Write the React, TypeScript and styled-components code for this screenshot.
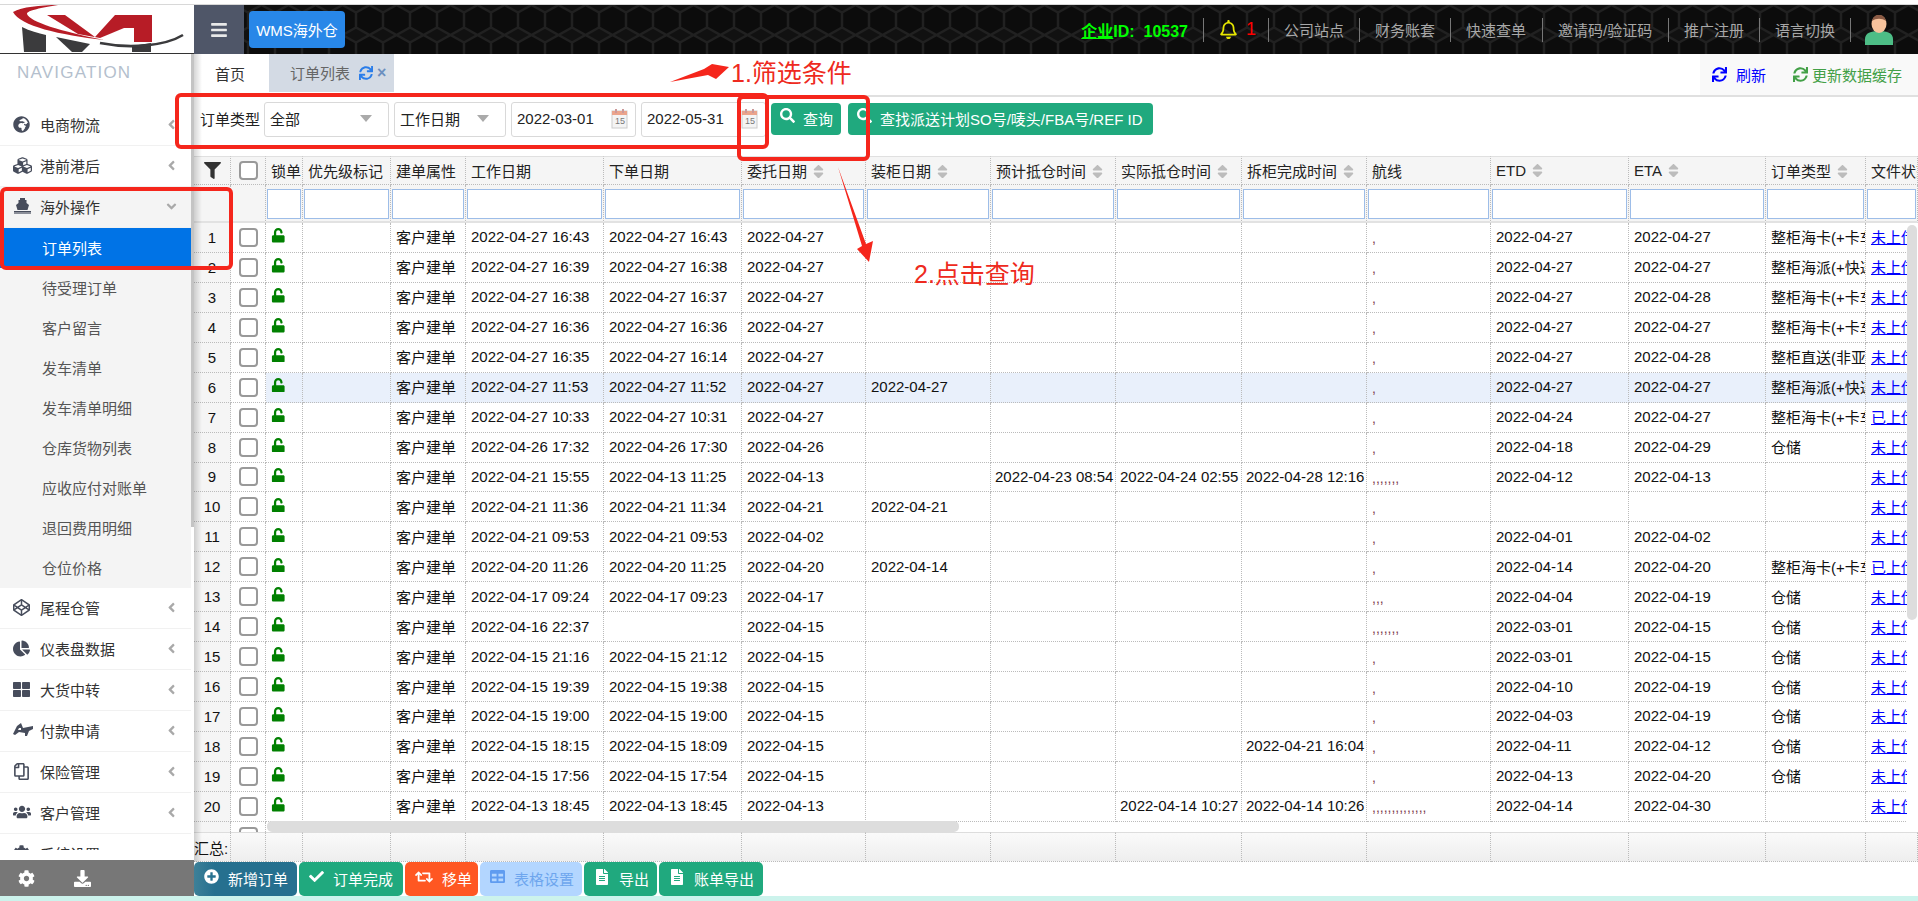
import React from "react";
import styled, { createGlobalStyle } from "styled-components";
import {
  FaAngleDown, FaAngleLeft, FaBars, FaChartPie, FaCheck, FaCodepen, FaCog, FaCubes, FaDownload,
  FaFileAlt, FaFilter, FaGlobeAfrica, FaPlusCircle, FaRegBell, FaRegCopy, FaRetweet,
  FaSearch, FaSort, FaSync, FaTable, FaThLarge, FaUnlock, FaUsers,
} from "react-icons/fa";

const FONT = `"Liberation Sans", "Noto Sans CJK SC", sans-serif`;

const Global = createGlobalStyle`
  html, body { margin: 0; padding: 0; background: #fff; overflow: hidden; }
  body { font-family: ${FONT}; font-size: 15px; color: #222; }
  * { box-sizing: border-box; }
`;

const Page = styled.div`
  position: relative;
  width: 1918px;
  height: 901px;
  display: flex;
  flex-direction: column;
  overflow: hidden;
`;
const TopLine = styled.div`
  height: 5px;
  flex: none;
  background: #fff;
  border-bottom: 1px solid #d8d8d8;
`;
const Header = styled.header`
  height: 49px;
  flex: none;
  display: flex;
  align-items: stretch;
`;
const LogoBox = styled.div`
  width: 194px;
  flex: none;
  background: #fff;
  border-bottom: 1px solid #333;
`;
const Toggle = styled.div`
  width: 50px;
  flex: none;
  background: #4f5668;
  color: #e8e8e8;
  display: flex;
  align-items: center;
  justify-content: center;
  font-size: 18px;
`;
const DarkBar = styled.div`
  position: relative;
  flex: 1;
  background: #111;
  display: flex;
  align-items: center;
  padding-left: 5px;
`;
const HexLayer = styled.svg`
  position: absolute;
  inset: 0;
  width: 100%;
  height: 100%;
`;
const WmsButton = styled.div`
  position: relative;
  width: 96px;
  height: 37px;
  background: #2887e8;
  color: #fff;
  border-radius: 4px;
  display: flex;
  align-items: center;
  justify-content: center;
  font-size: 15px;
`;
const HeadNav = styled.div`
  position: relative;
  margin-left: auto;
  display: flex;
  align-items: center;
`;
const IdText = styled.span`
  color: #0f0;
  font-weight: 700;
  font-size: 16px;
  padding-right: 15px;
`;
const HeadItem = styled.div<{ $w: number }>`
  width: ${(p) => p.$w}px;
  height: 24px;
  padding-left: 15px;
  border-left: 1px solid #777;
  color: #a8a8a8;
  display: flex;
  align-items: center;
  gap: 8px;
  font-size: 15px;
  white-space: nowrap;
`;
const BellCount = styled.span`
  color: #f00;
  font-size: 18px;
`;
const AvatarBox = styled.div`
  width: 68px;
  height: 24px;
  border-left: 1px solid #777;
  display: flex;
  align-items: center;
  padding-left: 13px;
`;

const Body = styled.div`
  flex: 1;
  min-height: 0;
  display: flex;
`;
const Sidebar = styled.aside`
  width: 194px;
  flex: none;
  display: flex;
  flex-direction: column;
  background: #fff;
`;
const NavScroll = styled.div`
  position: relative;
  flex: 1;
  min-height: 0;
  overflow: hidden;
`;
const NavTrack = styled.div`
  position: absolute;
  top: 0;
  right: 0;
  width: 3px;
  height: 473px;
  background: #c4c4c4;
`;
const NavFade = styled.div`
  position: absolute;
  left: 0;
  right: 0;
  bottom: 0;
  height: 10px;
  background: #fff;
`;
const NavTitle = styled.div`
  height: 51px;
  padding: 8px 0 0 17px;
  color: #b4bfcd;
  font-size: 17px;
  line-height: 22px;
  letter-spacing: 1.2px;
`;
const NavItem = styled.div<{ $open?: boolean }>`
  width: 191px;
  height: 41px;
  display: flex;
  align-items: center;
  padding: 0 0 2px 13px;
  background: ${(p) => (p.$open ? "#f4f4f4" : "#fff")};
  border-bottom: 1px solid #f1f1f1;
  color: #333;
  font-size: 15px;
`;
const NavIcon = styled.span`
  width: 27px;
  flex: none;
  display: flex;
  color: #474d5c;
  font-size: 17px;
`;
const NavArrow = styled.span`
  margin-left: auto;
  margin-right: 12px;
  display: flex;
  color: #a9a9a9;
  font-size: 15px;
`;
const SubItem = styled.div<{ $active?: boolean }>`
  width: 191px;
  height: 40px;
  display: flex;
  align-items: center;
  padding: 0 0 2px 42px;
  background: ${(p) => (p.$active ? "#0073e6" : "#f4f4f4")};
  color: ${(p) => (p.$active ? "#fff" : "#555")};
  font-size: 15px;
`;
const SideFoot = styled.div`
  height: 36px;
  flex: none;
  background: #777;
  color: #fff;
  display: flex;
  align-items: center;
  font-size: 17px;
  padding-left: 18px;
  gap: 39px;
`;

const Main = styled.main`
  position: relative;
  flex: 1;
  min-width: 0;
  display: flex;
  flex-direction: column;
  background: #fff;
`;
const LeftShade = styled.div`
  position: absolute;
  left: 0;
  top: 0;
  bottom: 34px;
  width: 8px;
  z-index: 3;
  pointer-events: none;
  background: linear-gradient(to right, rgba(0, 0, 0, 0.16), rgba(0, 0, 0, 0));
`;
const TabsRow = styled.div`
  height: 43px;
  flex: none;
  display: flex;
  border-bottom: 2px solid #e0e0e0;
`;
const Tab = styled.div<{ $on?: boolean }>`
  width: ${(p) => (p.$on ? 125 : 75)}px;
  height: ${(p) => (p.$on ? 38 : 41)}px;
  display: flex;
  align-items: center;
  padding: ${(p) => (p.$on ? "0 0 1px 21px" : "0 0 3px 21px")};
  gap: 9px;
  background: ${(p) => (p.$on ? "#d3dae4" : "#fff")};
  color: ${(p) => (p.$on ? "#666" : "#333")};
  font-size: 15px;
`;
const TabIcons = styled.span`
  display: flex;
  align-items: center;
  gap: 4px;
  color: #2b7de9;
  font-size: 14px;
  i { color: #6c8fbf; font-style: normal; font-size: 16px; font-weight: 700; }
`;
const TabTools = styled.div`
  margin-left: auto;
  width: 218px;
  height: 41px;
  background: #f9f9f9;
  display: flex;
  align-items: center;
  padding-left: 12px;
`;
const ToolLink = styled.span<{ $c: string; $w: number; $gap: number }>`
  width: ${(p) => p.$w}px;
  display: flex;
  align-items: center;
  gap: ${(p) => p.$gap}px;
  color: ${(p) => p.$c};
  font-size: 15px;
  white-space: nowrap;
`;
const FilterBar = styled.div`
  height: 59px;
  flex: none;
  display: flex;
  align-items: flex-start;
  padding: 5px 0 0 6px;
`;
const FilterLabel = styled.span`
  width: 64px;
  height: 35px;
  display: flex;
  align-items: center;
  padding-bottom: 2px;
  font-size: 15px;
`;
const Field = styled.div<{ $w: number }>`
  width: ${(p) => p.$w}px;
  height: 35px;
  margin-right: 5px;
  border: 1px solid #d9d9d9;
  border-radius: 3px;
  background: #fff;
  display: flex;
  align-items: center;
  justify-content: space-between;
  padding: 0 6px 2px 5px;
  font-size: 15px;
`;
const Caret = styled.span`
  width: 0;
  height: 0;
  margin-right: 10px;
  border-left: 6px solid transparent;
  border-right: 6px solid transparent;
  border-top: 7px solid #aaa;
`;
const GreenBtn = styled.div<{ $w: number }>`
  position: relative;
  width: ${(p) => p.$w}px;
  height: 32px;
  margin: 1px 7px 0 0;
  background: #20a97e;
  border-radius: 4px;
  color: #fff;
  display: flex;
  align-items: center;
  padding: 0 0 2px 9px;
  gap: 8px;
  font-size: 15px;
  white-space: nowrap;
  svg { margin-top: -5px; flex: none; }
`;

const TableArea = styled.div`
  position: relative;
  height: 676px;
  flex: none;
  overflow: hidden;
`;
const Grid = styled.table`
  table-layout: fixed;
  width: 1724px;
  border-collapse: separate;
  border-spacing: 0;
  font-size: 15px;
  color: #111;
  th, td {
    padding: 0 5px 1px;
    border-right: 1px dotted #bbb;
    border-bottom: 1px dotted #bbb;
    white-space: nowrap;
    overflow: hidden;
    font-weight: 400;
    text-align: left;
  }
`;
const HeadRow = styled.tr`
  height: 29px;
  background: #f5f5f5;
  th { border-top: 1px solid #e0e0e0; color: #222; }
`;
const SearchRow = styled.tr`
  height: 38px;
  background: #f5f5f5;
  td { padding: 2px 1px 0; border-bottom: 2px solid #e2e2e2; }
`;
const SearchBox = styled.input`
  display: block;
  width: 100%;
  height: 30px;
  border: 1px solid #9dbde8;
  background: #fff;
  outline: none;
`;
const DataRow = styled.tr<{ $hi?: boolean }>`
  height: 29.95px;
  background: ${(p) => (p.$hi ? "#e9f0fb" : "#fff")};
`;
const NumCell = styled.td`
  background: #f5f5f5;
  &&& { text-align: center; padding: 0; }
`;
const BoxCell = styled.td`
  background: #fff;
  &&& { padding: 0 0 0 8px; }
`;
const BlankCell = styled.td`
  &&& { border-right: 0; border-bottom: 0; background: #fff; }
`;
const Check = styled.span`
  display: block;
  width: 19px;
  height: 19px;
  border: 2px solid #999;
  border-radius: 4px;
  background: #fff;
`;
const LockIcon = styled(FaUnlock)`
  display: block;
  margin: -3px 0 0 0;
  color: #008000;
  font-size: 14.5px;
`;
const HeadSort = styled.span`
  display: inline-flex;
  margin-left: 3px;
  vertical-align: -3px;
  color: #bcbcbc;
  font-size: 17px;
`;
const RouteText = styled.span`
  display: block;
  margin-top: 3px;
  color: #7d3c50;
  font-size: 14px;
  line-height: 16px;
`;
const FileLink = styled.a`
  color: #00f;
  text-decoration: underline;
`;
const BodyGutter = styled.div`
  position: absolute;
  top: 67px;
  right: 0;
  width: 11px;
  bottom: 0;
  background: #fff;
  z-index: 1;
`;
const VScroll = styled.div`
  position: absolute;
  top: 69px;
  right: 1px;
  width: 10px;
  height: 395px;
  background: #ddd;
  border-radius: 5px;
  z-index: 2;
`;
const HScroll = styled.div`
  position: absolute;
  left: 73px;
  bottom: 0;
  width: 692px;
  height: 11px;
  background: #ddd;
  border-radius: 5px;
  z-index: 2;
`;
const SumGrid = styled(Grid)`
  flex: none;
  td {
    height: 30px;
    background: linear-gradient(#fafafa, #eee);
    border-top: 1px solid #ddd;
    padding: 0;
    overflow: visible;
  }
`;
const ActionBar = styled.div`
  height: 34px;
  flex: none;
  display: flex;
  gap: 2px;
`;
const ActionBtn = styled.div<{ $w: number; $bg: string; $fg?: string; $ic?: string }>`
  width: ${(p) => p.$w}px;
  height: 34px;
  display: flex;
  align-items: center;
  padding: 0 0 2px 10px;
  gap: 9px;
  border-radius: 5px;
  background: ${(p) => p.$bg};
  color: ${(p) => p.$fg || "#fff"};
  font-size: 15px;
  white-space: nowrap;
  svg { flex: none; margin-top: -3px; color: ${(p) => p.$ic || "#fff"}; }
`;
const Strip = styled.div`
  height: 5px;
  flex: none;
  background: #ccf3ec;
`;
const MarkLayer = styled.svg`
  position: absolute;
  left: 0;
  top: 0;
  width: 1918px;
  height: 901px;
  z-index: 10;
  pointer-events: none;
`;
const MarkText = styled.span<{ $x: number; $y: number }>`
  position: absolute;
  left: ${(p) => p.$x}px;
  top: ${(p) => p.$y}px;
  z-index: 11;
  color: #ee2a20;
  font-size: 25px;
  line-height: 28px;
  white-space: nowrap;
`;

const COLS = [37, 35, 37, 88, 75, 138, 138, 124, 125, 125, 126, 125, 124, 138, 137, 100, 52];
const Cols = () => (
  <colgroup>
    {COLS.map((w, i) => (
      <col key={i} style={{ width: w }} />
    ))}
  </colgroup>
);

const HEADS: [string, boolean][] = [
  ["锁单", false], ["优先级标记", false], ["建单属性", false], ["工作日期", false], ["下单日期", false],
  ["委托日期", true], ["装柜日期", true], ["预计抵仓时间", true], ["实际抵仓时间", true], ["拆柜完成时间", true],
  ["航线", false], ["ETD", true], ["ETA", true], ["订单类型", true], ["文件状态", false],
];

const K = "整柜海卡(+卡车派送)";
const P = "整柜海派(+快递派送)";
const Z = "整柜直送(非亚马逊)";
const C = "仓储";
type R = [string, string, string, string, string, string, string, string, string, string, string, string];
const d = (s: string) => (s ? "2022-" + s : "");
const ROWS: R[] = [
  ["04-27 16:43", "04-27 16:43", "04-27", "", "", "", "", ",", "04-27", "04-27", K, "未上传"],
  ["04-27 16:39", "04-27 16:38", "04-27", "", "", "", "", ",", "04-27", "04-27", P, "未上传"],
  ["04-27 16:38", "04-27 16:37", "04-27", "", "", "", "", ",", "04-27", "04-28", K, "未上传"],
  ["04-27 16:36", "04-27 16:36", "04-27", "", "", "", "", ",", "04-27", "04-27", K, "未上传"],
  ["04-27 16:35", "04-27 16:14", "04-27", "", "", "", "", ",", "04-27", "04-28", Z, "未上传"],
  ["04-27 11:53", "04-27 11:52", "04-27", "04-27", "", "", "", ",", "04-27", "04-27", P, "未上传"],
  ["04-27 10:33", "04-27 10:31", "04-27", "", "", "", "", ",", "04-24", "04-27", K, "已上传"],
  ["04-26 17:32", "04-26 17:30", "04-26", "", "", "", "", ",", "04-18", "04-29", C, "未上传"],
  ["04-21 15:55", "04-13 11:25", "04-13", "", "04-23 08:54", "04-24 02:55", "04-28 12:16", ",,,,,,,", "04-12", "04-13", "", "未上传"],
  ["04-21 11:36", "04-21 11:34", "04-21", "04-21", "", "", "", ",", "", "", "", "未上传"],
  ["04-21 09:53", "04-21 09:53", "04-02", "", "", "", "", ",", "04-01", "04-02", "", "未上传"],
  ["04-20 11:26", "04-20 11:25", "04-20", "04-14", "", "", "", ",", "04-14", "04-20", K, "已上传"],
  ["04-17 09:24", "04-17 09:23", "04-17", "", "", "", "", ",,,", "04-04", "04-19", C, "未上传"],
  ["04-16 22:37", "", "04-15", "", "", "", "", ",,,,,,,", "03-01", "04-15", C, "未上传"],
  ["04-15 21:16", "04-15 21:12", "04-15", "", "", "", "", ",", "03-01", "04-15", C, "未上传"],
  ["04-15 19:39", "04-15 19:38", "04-15", "", "", "", "", ",", "04-10", "04-19", C, "未上传"],
  ["04-15 19:00", "04-15 19:00", "04-15", "", "", "", "", ",", "04-03", "04-19", C, "未上传"],
  ["04-15 18:15", "04-15 18:09", "04-15", "", "", "", "04-21 16:04", ",", "04-11", "04-12", C, "未上传"],
  ["04-15 17:56", "04-15 17:54", "04-15", "", "", "", "", ",", "04-13", "04-20", C, "未上传"],
  ["04-13 18:45", "04-13 18:45", "04-13", "", "", "04-14 10:27", "04-14 10:26", ",,,,,,,,,,,,,,", "04-14", "04-30", "", "未上传"],
];

const Logo = () => (
  <svg width="194" height="49" viewBox="0 5 194 49">
    <defs>
      <filter id="lb"><feGaussianBlur stdDeviation="0.6" /></filter>
    </defs>
    <g filter="url(#lb)">
      <path d="M47 15H65L95 37 115 15H152V42H134V28H124L100 38 78 34Z" fill="#b71c26" />
      <path d="M13 12C22 7 40 5 58 5 42 8 27 10 27 14 30 22 60 31 104 40 60 35 20 26 13 12Z" fill="#b71c26" />
      <path d="M22 27C30 31 38 33 46 35V52H24Z" fill="#3a3a3c" />
      <path d="M56 37 90 44 82 52H72Z" fill="#3a3a3c" />
      <path d="M132 46 151 43V52H132Z" fill="#3a3a3c" />
      <path d="M100 43C130 49 165 46 183 35" fill="none" stroke="#3a3a3c" strokeWidth="2.6" />
    </g>
  </svg>
);

const ShipIcon = () => (
  <svg width="19" height="18" viewBox="0 0 19 18" fill="currentColor">
    <path d="M7 1h5v2h1.5v3L16 8l-1.5 5h-10L3 8l2.5-2V3H7z" />
    <rect x="1" y="14" width="17" height="3" fill="#8b8f99" />
    <path d="M1 14h17v1H1z" />
  </svg>
);

const PayIcon = () => (
  <svg width="21" height="14" viewBox="0 0 21 14" fill="currentColor">
    <path fillRule="evenodd" d="M0 11 4 3 8 0 10 5 20 3 20 6 16 8 14 13 12 13 12 10 6 9 2 12ZM6 5 5 7 8 7 8 5Z" />
  </svg>
);

const Calendar = () => (
  <svg width="18" height="20" viewBox="0 0 18 20">
    <rect x="1" y="2" width="15" height="17" fill="#f4f4f4" stroke="#ccc" />
    <rect x="1" y="2" width="15" height="4" fill="#eba48c" />
    <rect x="4" y="0" width="2" height="4" fill="#c99" />
    <rect x="11" y="0" width="2" height="4" fill="#c99" />
    <text x="4" y="15" fontSize="9" fontFamily="Liberation Sans" fill="#777">15</text>
  </svg>
);

const Avatar = () => (
  <svg width="30" height="30" viewBox="0 0 30 30">
    <path d="M1 30V24C1 18 7 16 15 16S29 18 29 24V30Z" fill="#4dbd86" />
    <ellipse cx="15" cy="9" rx="7.5" ry="9" fill="#f6c29c" />
    <path d="M8 6C9 1 12 0 15 0S21 1 22 6C18 3 12 3 8 6Z" fill="#8a5a44" />
  </svg>
);

const Marks = () => (
  <MarkLayer viewBox="0 0 1918 901">
    <g fill="none" stroke="#f5261c" strokeWidth="4">
      <rect x="177" y="95" width="590" height="52" rx="4" />
      <rect x="739" y="97" width="129" height="62" rx="4" />
      <rect x="2" y="189" width="229" height="79" rx="4" />
    </g>
    <g fill="#f5261c">
      <polygon points="670,82 704,69 712,64 729,67 716,79 708,75" />
      <polygon points="838,167 866,244 873,241 869,262 857,249 862,246" />
    </g>
  </MarkLayer>
);

export default function App() {
  return (
    <Page>
      <Global />
      <TopLine />
      <Header>
        <LogoBox><Logo /></LogoBox>
        <Toggle><FaBars /></Toggle>
        <DarkBar>
          <HexLayer>
            <defs>
              <pattern id="hex" width="27" height="30" patternUnits="userSpaceOnUse" x="4" y="0">
                <path d="M13.5 0 27 7.5V22.5L13.5 30 0 22.5V7.5Z" fill="#0c0c0c" stroke="#212121" strokeWidth="2.4" />
              </pattern>
            </defs>
            <rect width="100%" height="100%" fill="url(#hex)" />
          </HexLayer>
          <WmsButton>WMS海外仓</WmsButton>
          <HeadNav>
            <IdText><u>企业</u>ID:&nbsp;&nbsp;10537</IdText>
            <HeadItem $w={65}>
              <FaRegBell color="#e6e600" size={19} />
              <BellCount>1</BellCount>
            </HeadItem>
            <HeadItem $w={91}>公司站点</HeadItem>
            <HeadItem $w={91}>财务账套</HeadItem>
            <HeadItem $w={92}>快速查单</HeadItem>
            <HeadItem $w={126}>邀请码/验证码</HeadItem>
            <HeadItem $w={91}>推广注册</HeadItem>
            <HeadItem $w={91}>语言切换</HeadItem>
            <AvatarBox><Avatar /></AvatarBox>
          </HeadNav>
        </DarkBar>
      </Header>
      <Body>
        <Sidebar>
          <NavScroll>
            <NavTrack />
            <NavTitle>NAVIGATION</NavTitle>
            <NavItem><NavIcon><FaGlobeAfrica /></NavIcon>电商物流<NavArrow><FaAngleLeft /></NavArrow></NavItem>
            <NavItem><NavIcon><FaCubes size={19} /></NavIcon>港前港后<NavArrow><FaAngleLeft /></NavArrow></NavItem>
            <NavItem $open><NavIcon><ShipIcon /></NavIcon>海外操作<NavArrow><FaAngleDown /></NavArrow></NavItem>
            <SubItem $active>订单列表</SubItem>
            {["待受理订单", "客户留言", "发车清单", "发车清单明细", "仓库货物列表", "应收应付对账单", "退回费用明细", "仓位价格"].map((s) => (
              <SubItem key={s}>{s}</SubItem>
            ))}
            <NavItem><NavIcon><FaCodepen /></NavIcon>尾程仓管<NavArrow><FaAngleLeft /></NavArrow></NavItem>
            <NavItem><NavIcon><FaChartPie /></NavIcon>仪表盘数据<NavArrow><FaAngleLeft /></NavArrow></NavItem>
            <NavItem><NavIcon><FaThLarge /></NavIcon>大货中转<NavArrow><FaAngleLeft /></NavArrow></NavItem>
            <NavItem><NavIcon><PayIcon /></NavIcon>付款申请<NavArrow><FaAngleLeft /></NavArrow></NavItem>
            <NavItem><NavIcon><FaRegCopy style={{ transform: "scaleX(-1)" }} /></NavIcon>保险管理<NavArrow><FaAngleLeft /></NavArrow></NavItem>
            <NavItem><NavIcon><FaUsers size={18} /></NavIcon>客户管理<NavArrow><FaAngleLeft /></NavArrow></NavItem>
            <NavItem><NavIcon><FaCog /></NavIcon>系统设置</NavItem>
            <NavFade />
          </NavScroll>
          <SideFoot><FaCog /><FaDownload /></SideFoot>
        </Sidebar>
        <Main>
          <LeftShade />
          <TabsRow>
            <Tab>首页</Tab>
            <Tab $on>订单列表<TabIcons><FaSync /><i>×</i></TabIcons></Tab>
            <TabTools>
              <ToolLink $c="#00f" $w={81} $gap={9}><FaSync />刷新</ToolLink>
              <ToolLink $c="#43a047" $w={116} $gap={4}><FaSync />更新数据缓存</ToolLink>
            </TabTools>
          </TabsRow>
          <FilterBar>
            <FilterLabel>订单类型</FilterLabel>
            <Field $w={125}>全部<Caret /></Field>
            <Field $w={112}>工作日期<Caret /></Field>
            <Field $w={125}>2022-03-01<Calendar /></Field>
            <Field $w={125}>2022-05-31<Calendar /></Field>
            <GreenBtn $w={70}><FaSearch size={15} />查询</GreenBtn>
            <GreenBtn $w={305}><FaSearch size={15} />查找派送计划SO号/唛头/FBA号/REF ID</GreenBtn>
          </FilterBar>
          <TableArea>
            <Grid>
              <Cols />
              <thead>
                <HeadRow>
                  <th style={{ padding: "3px 0 0 10px" }}><FaFilter size={17} color="#333" /></th>
                  <th style={{ padding: "0 0 0 8px" }}><Check /></th>
                  {HEADS.map(([t, s]) => (
                    <th key={t}>{t}{s && <HeadSort><FaSort /></HeadSort>}</th>
                  ))}
                </HeadRow>
                <SearchRow>
                  <td /><td />
                  {HEADS.map(([t]) => (
                    <td key={t}><SearchBox aria-label={t} /></td>
                  ))}
                </SearchRow>
              </thead>
              <tbody>
                {ROWS.map((r, i) => (
                  <DataRow key={i} $hi={i === 5}>
                    <NumCell>{i + 1}</NumCell>
                    <BoxCell><Check /></BoxCell>
                    <td><LockIcon /></td>
                    <td />
                    <td>客户建单</td>
                    <td>{d(r[0])}</td>
                    <td>{d(r[1])}</td>
                    <td>{d(r[2])}</td>
                    <td>{d(r[3])}</td>
                    <td style={{ padding: "0 0 1px 4px" }}>{d(r[4])}</td>
                    <td style={{ padding: "0 0 1px 4px" }}>{d(r[5])}</td>
                    <td style={{ padding: "0 0 1px 4px" }}>{d(r[6])}</td>
                    <td><RouteText>{r[7]}</RouteText></td>
                    <td>{d(r[8])}</td>
                    <td>{d(r[9])}</td>
                    <td>{r[10]}</td>
                    <td><FileLink href="#">{r[11]}</FileLink></td>
                  </DataRow>
                ))}
                <DataRow>
                  <NumCell>21</NumCell>
                  <BoxCell><Check /></BoxCell>
                  <BlankCell colSpan={15} />
                </DataRow>
              </tbody>
            </Grid>
            <BodyGutter />
            <VScroll />
            <HScroll />
          </TableArea>
          <SumGrid>
            <Cols />
            <tbody>
              <tr>
                <td>汇总:</td>
                {COLS.slice(1).map((_, i) => <td key={i} />)}
              </tr>
            </tbody>
          </SumGrid>
          <ActionBar>
            <ActionBtn $w={103} $bg="linear-gradient(to right,#3d8098,#26708f 20%)"><FaPlusCircle size={15} />新增订单</ActionBtn>
            <ActionBtn $w={104} $bg="#20a97e"><FaCheck size={15} />订单完成</ActionBtn>
            <ActionBtn $w={73} $bg="#ff5722"><FaRetweet size={18} />移单</ActionBtn>
            <ActionBtn $w={102} $bg="#b3d6ff" $fg="#6ea6ee" $ic="#5f9cf0"><FaTable size={15} />表格设置</ActionBtn>
            <ActionBtn $w={73} $bg="#20a97e"><FaFileAlt size={16} />导出</ActionBtn>
            <ActionBtn $w={104} $bg="#20a97e"><FaFileAlt size={16} />账单导出</ActionBtn>
          </ActionBar>
        </Main>
      </Body>
      <Strip />
      <Marks />
      <MarkText $x={731} $y={59}>1.筛选条件</MarkText>
      <MarkText $x={914} $y={260}>2.点击查询</MarkText>
    </Page>
  );
}
